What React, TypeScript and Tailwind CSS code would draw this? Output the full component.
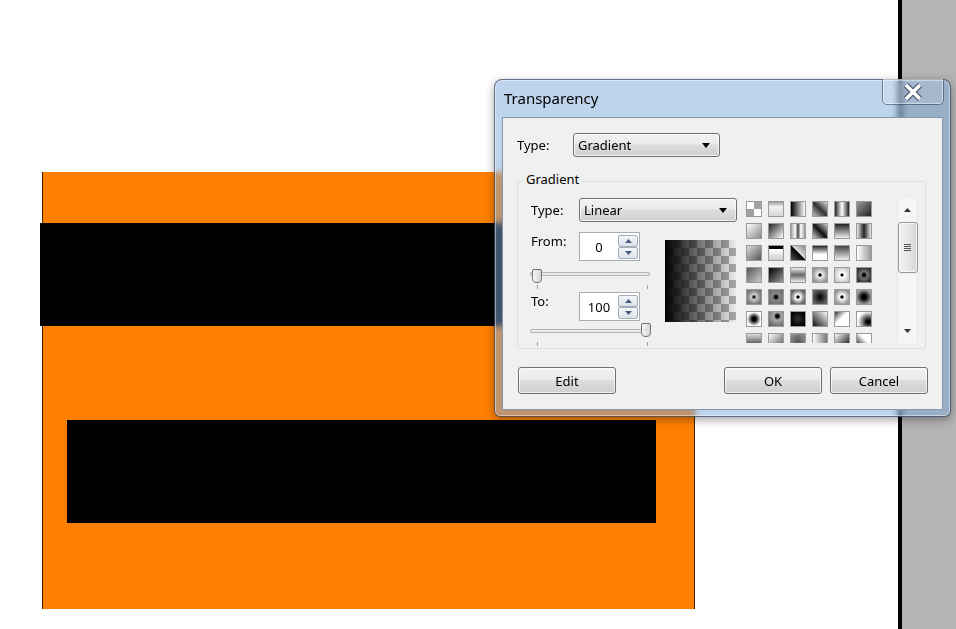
import React from "react";

const swatches: string[] = [
  "bg-[repeating-conic-gradient(#a0a0a0_0%_25%,#fff_0%_50%)]",
  "bg-[linear-gradient(to_bottom,#9a9a9a,#f4f4f4_35%,#d8d8d8)]",
  "bg-[linear-gradient(to_right,#000,#fff)]",
  "bg-[linear-gradient(45deg,#bbb,#333_50%,#ddd)]",
  "bg-[linear-gradient(to_right,#222,#fff_50%,#222)]",
  "bg-[linear-gradient(to_bottom_right,#999,#222)]",
  "bg-[linear-gradient(135deg,#fff,#888)]",
  "bg-[linear-gradient(135deg,#222,#fff)]",
  "bg-[linear-gradient(to_right,#999,#fff_30%,#444_50%,#fff_70%,#999)]",
  "bg-[linear-gradient(45deg,#ccc,#111_50%,#ccc)]",
  "bg-[linear-gradient(to_bottom,#222,#eee)]",
  "bg-[linear-gradient(to_right,#eee,#222_50%,#eee)]",
  "bg-[linear-gradient(135deg,#ddd,#555)]",
  "bg-[linear-gradient(to_bottom,#000_20%,#fff_25%,#ccc)]",
  "bg-[linear-gradient(45deg,#555,#000_50%,#ddd_55%,#888)]",
  "bg-[linear-gradient(to_bottom,#222,#fff_60%)]",
  "bg-[linear-gradient(to_bottom,#444,#f0f0f0)]",
  "bg-[linear-gradient(to_right,#fff,#999)]",
  "bg-[linear-gradient(135deg,#555,#ccc)]",
  "bg-[linear-gradient(135deg,#000,#999)]",
  "bg-[linear-gradient(to_bottom,#eee,#666_50%,#eee)]",
  "bg-[radial-gradient(circle,#000_12%,#eee_22%,#999_75%)]",
  "bg-[radial-gradient(circle,#000_12%,#fff_20%,#ccc_75%)]",
  "bg-[radial-gradient(circle,#000_10%,#777_35%,#333_75%)]",
  "bg-[radial-gradient(circle,#222_10%,#ccc_25%,#777_75%)]",
  "bg-[radial-gradient(circle,#000_10%,#888_35%,#666)]",
  "bg-[radial-gradient(circle,#000_12%,#fff_22%,#666_75%)]",
  "bg-[radial-gradient(circle,#000,#666_80%)]",
  "bg-[radial-gradient(circle,#000_12%,#fff_22%,#999_75%)]",
  "bg-[radial-gradient(circle,#000_20%,#aaa_80%)]",
  "bg-[radial-gradient(circle,#000_20%,#fff_70%)]",
  "bg-[radial-gradient(circle_at_60%_30%,#000_10%,#aaa_30%,#555)]",
  "bg-[radial-gradient(circle,#333,#000_80%)]",
  "bg-[linear-gradient(to_bottom_left,#fff,#111)]",
  "bg-[linear-gradient(135deg,#333,#fff_45%)]",
  "bg-[radial-gradient(circle_at_80%_70%,#000_10%,#fff_70%)]",
  "bg-[linear-gradient(to_bottom,#ddd,#222)]",
  "bg-[linear-gradient(135deg,#fff,#555)]",
  "bg-[radial-gradient(circle,#555,#999)]",
  "bg-[linear-gradient(to_right,#fff,#777)]",
  "bg-[linear-gradient(135deg,#fff,#000)]",
  "bg-[linear-gradient(45deg,#000,#fff_60%)]",
];

function Tri({ up, color, w = 7, h = 4 }: { up?: boolean; color: string; w?: number; h?: number }) {
  return (
    <svg width={w} height={h} viewBox={`0 0 ${w} ${h}`} className="block">
      {up ? (
        <path d={`M0 ${h}H${w}L${w / 2} 0Z`} fill={color} />
      ) : (
        <path d={`M0 0H${w}L${w / 2} ${h}Z`} fill={color} />
      )}
    </svg>
  );
}

function Combo({ text, wide }: { text: string; wide?: boolean }) {
  return (
    <div
      className={
        (wide ? "w-[158px] " : "w-[147px] ") +
        "h-[24px] flex items-center justify-between pl-[4px] pr-[9px] rounded-[3px] border border-[#707070] bg-[linear-gradient(to_bottom,#f2f2f2,#ebebeb_45%,#dddddd_50%,#cfcfcf)] shadow-[inset_0_0_0_1px_rgba(255,255,255,0.7)]"
      }
    >
      <span>{text}</span>
      <Tri color="#000" w={8} h={5} />
    </div>
  );
}

function Spinner({ value }: { value: string }) {
  return (
    <div className="w-[61px] h-[29px] flex border border-[#abadb3] bg-white">
      <div className="flex-1 flex items-center justify-center">{value}</div>
      <div className="w-[21px] flex flex-col pt-[2px] pb-[1px] pr-[1px]">
        <div className="h-[12px] w-full flex items-center justify-center rounded-[2px] border border-[#a3aebd] bg-[linear-gradient(to_bottom,#f4f6f9,#dde2ea)]">
          <Tri up color="#4b5d7f" />
        </div>
        <div className="h-[12px] w-full flex items-center justify-center rounded-[2px] border border-[#a3aebd] bg-[linear-gradient(to_bottom,#f4f6f9,#dde2ea)]">
          <Tri color="#4b5d7f" />
        </div>
      </div>
    </div>
  );
}

function Thumb() {
  return (
    <svg width="10" height="14" viewBox="0 0 10 14" className="block">
      <defs>
        <linearGradient id="tg" x1="0" x2="1" y1="0" y2="0">
          <stop offset="0" stopColor="#f7f7f7" />
          <stop offset="1" stopColor="#d4d4d4" />
        </linearGradient>
      </defs>
      <path d="M2 0.5H8A1.5 1.5 0 0 1 9.5 2V9.5Q9.5 13.5 5 13.5Q0.5 13.5 0.5 9.5V2A1.5 1.5 0 0 1 2 0.5Z" fill="url(#tg)" stroke="#707070" />
    </svg>
  );
}

function Btn({ label }: { label: string }) {
  return (
    <div className="w-[98px] h-[27px] flex items-center justify-center rounded-[3px] border border-[#707070] bg-[linear-gradient(to_bottom,#f2f2f2,#ebebeb_45%,#dddddd_50%,#cfcfcf)] shadow-[inset_0_0_0_1px_rgba(255,255,255,0.7)]">
      {label}
    </div>
  );
}

function Dialog() {
  return (
    <div className="absolute left-[494px] top-[79px] w-[457px] h-[338px] flex flex-col rounded-t-[8px] rounded-b-[6px] border border-[rgba(20,30,50,0.55)] bg-[rgba(125,170,220,0.5)] backdrop-blur-[3px] px-[7px] pb-[6px] shadow-[0_3px_10px_rgba(0,0,0,0.35),inset_0_0_0_1px_rgba(255,255,255,0.45)]">
      <div className="h-[37px] flex items-center pl-[2px] text-[15px] text-black">Transparency</div>
      <div className="absolute top-[-1px] right-[6px] w-[62px] h-[26px] flex items-center justify-center rounded-b-[5px] border border-t-0 border-[rgba(40,50,70,0.55)] bg-[rgba(255,255,255,0.12)] shadow-[inset_0_0_0_1px_rgba(255,255,255,0.45)]">
        <svg width="22" height="18" viewBox="0 0 22 18" className="block">
          <path d="M4 2L18 16M18 2L4 16" stroke="#4c5566" strokeWidth="6" />
          <path d="M4 2L18 16M18 2L4 16" stroke="#ffffff" strokeWidth="3.6" />
        </svg>
      </div>
      <div className="flex-1 flex flex-col bg-[#f0f0f0] border border-[#8597ad] text-[13px] leading-[18px] text-black">
        <div className="mt-[15px] pl-[14px] flex items-center">
          <span className="w-[56px]">Type:</span>
          <Combo text="Gradient" />
        </div>
        <div className="mt-[24px] ml-[14px] w-[409px] h-[168px] relative border border-[#d5dfe5] rounded-[3px]">
          <span className="absolute left-[6px] top-[-12px] px-[2px] bg-[#f0f0f0]">Gradient</span>
          <div className="flex items-start pl-[13px] pt-[16px]">
            <div className="w-[206px] flex flex-col">
              <div className="flex items-center h-[24px]">
                <span className="w-[48px]">Type:</span>
                <Combo text="Linear" wide />
              </div>
              <div className="flex items-start">
                <div className="w-[134px] flex flex-col mt-[10px]">
                  <div className="flex items-start h-[29px]">
                    <span className="w-[48px]">From:</span>
                    <Spinner value="0" />
                  </div>
                  <div className="relative h-[31px]">
                    <div className="absolute left-[-1px] top-[11px] w-[120px] h-[4px] border border-[#b6b6b6] bg-[#e8e8e8] rounded-[1px]" />
                    <div className="absolute left-[1px] top-[8px]"><Thumb /></div>
                    <div className="absolute left-[6px] top-[24px] w-px h-[4px] bg-[#a0a0a0]" />
                    <div className="absolute left-[116px] top-[24px] w-px h-[4px] bg-[#a0a0a0]" />
                  </div>
                  <div className="flex items-start h-[29px]">
                    <span className="w-[48px]">To:</span>
                    <Spinner value="100" />
                  </div>
                  <div className="relative h-[26px]">
                    <div className="absolute left-[-1px] top-[8px] w-[120px] h-[4px] border border-[#b6b6b6] bg-[#e8e8e8] rounded-[1px]" />
                    <div className="absolute left-[110px] top-[2px]"><Thumb /></div>
                    <div className="absolute left-[6px] top-[21px] w-px h-[4px] bg-[#a0a0a0]" />
                    <div className="absolute left-[116px] top-[21px] w-px h-[4px] bg-[#a0a0a0]" />
                  </div>
                </div>
                <div className="mt-[18px] w-[71px] h-[82px] bg-[repeating-conic-gradient(#a8a8a8_0%_25%,#ececec_0%_50%)] bg-[length:16px_16px]">
                  <div className="w-full h-full bg-[linear-gradient(to_right,#000,rgba(0,0,0,0))]" />
                </div>
              </div>
            </div>
            <div className="ml-[9px] mt-[3px] h-[142px] overflow-hidden">
              <div className="grid grid-cols-[repeat(6,16px)] gap-[6px]">
                {swatches.map((s, i) => (
                  <div key={i} className={"w-[16px] h-[16px] border border-[#9a9a9a] " + s} />
                ))}
              </div>
            </div>
            <div className="ml-[25px] w-[21px] h-[145px] flex flex-col items-center bg-[#f5f5f5] border-x border-[#e8e8e8]">
              <div className="h-[24px] w-full flex items-center justify-center">
                <Tri up color="#333" />
              </div>
              <div className="w-[20px] h-[51px] rounded-[3px] border border-[#979797] bg-[linear-gradient(to_right,#f4f4f4,#e6e6e6_50%,#d6d6d6)] shadow-[inset_0_0_0_1px_rgba(255,255,255,0.7)] flex flex-col items-center justify-center gap-[1px]">
                <div className="w-[7px] h-px bg-[#555]" />
                <div className="w-[7px] h-px bg-[#555]" />
                <div className="w-[7px] h-px bg-[#555]" />
                <div className="w-[7px] h-px bg-[#555]" />
              </div>
              <div className="flex-1" />
              <div className="h-[24px] w-full flex items-center justify-center">
                <Tri color="#333" />
              </div>
            </div>
          </div>
        </div>
        <div className="mt-[18px] flex items-center pl-[15px] pr-[14px]">
          <Btn label="Edit" />
          <div className="flex-1" />
          <div className="flex gap-[8px]">
            <Btn label="OK" />
            <Btn label="Cancel" />
          </div>
        </div>
      </div>
    </div>
  );
}

export default function App() {
  return (
    <div className="relative w-[956px] h-[629px] flex overflow-hidden bg-white font-['Noto_Sans',sans-serif]">
      <div className="relative w-[898px] h-full bg-white">
        <div className="absolute left-[42px] top-[172px] w-[653px] h-[437px] bg-[#ff8000] border-x border-[#3a2200]" />
        <div className="absolute left-[40px] top-[223px] w-[660px] h-[103px] bg-black" />
        <div className="absolute left-[67px] top-[420px] w-[589px] h-[103px] bg-black" />
      </div>
      <div className="w-[4px] h-full bg-black" />
      <div className="flex-1 h-full bg-[#b4b4b4]" />
      <Dialog />
    </div>
  );
}
